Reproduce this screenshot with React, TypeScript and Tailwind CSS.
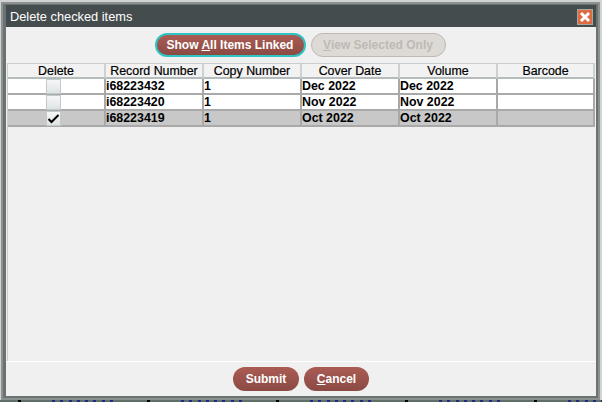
const columns = ["Delete", "Record Number", "Copy Number", "Cover Date", "Volume", "Barcode"];

const rows = [
  { id: "i68223432", copy: "1", cover: "Dec 2022", volume: "Dec 2022", checked: false },
  { id: "i68223420", copy: "1", cover: "Nov 2022", volume: "Nov 2022", checked: false },
  { id: "i68223419", copy: "1", cover: "Oct 2022", volume: "Oct 2022", checked: true },
];

function CheckBox({ checked }: { checked: boolean }) {
  return (
    <div className="w-[15px] h-[15px] border border-[#c4caca] bg-gradient-to-b from-[#f6f8f8] to-[#dde3e3] flex items-center justify-center">
      {checked && (
        <svg width="13" height="11" viewBox="0 0 13 11">
          <path d="M1.5 6 L4.5 9 L11.5 2" fill="none" stroke="#000" strokeWidth="2" />
        </svg>
      )}
    </div>
  );
}

function PillButton({
  children,
  className,
}: {
  children: React.ReactNode;
  className: string;
}) {
  return (
    <button className={"h-[24px] rounded-[13px] text-[12px] font-bold flex items-center justify-center " + className}>
      {children}
    </button>
  );
}

export default function App() {
  return (
    <div className="w-[602px] h-[402px] overflow-hidden bg-[#d2d4d4] flex flex-col font-['Liberation_Sans',Arial,sans-serif]">
      <div className="ml-[1px] mt-[2px] w-[599px] h-[398px] shrink-0 bg-[#6b7372] border-[2px] border-[#8a9190] pt-[1px] pl-[3px] pr-[2px] pb-[2px] flex flex-col">
        <div className="h-[22px] shrink-0 bg-[#454c4d] flex items-center justify-between pt-[2px] pl-[4px] pr-[3px]">
          <span className="text-[12.8px] text-white leading-none">Delete checked items</span>
          <div className="w-[16px] h-[16px] bg-[#dd6a42] border border-[#a8a8a0] flex items-center justify-center">
            <svg width="12" height="12" viewBox="0 0 12 12">
              <path d="M2 2 L10 10 M10 2 L2 10" stroke="#fff" strokeWidth="3" />
            </svg>
          </div>
        </div>
        <div className="flex-1 bg-[#f0f0f0] flex flex-col min-h-0">
          <div className="h-[36px] shrink-0 flex items-center justify-center gap-[5px] pr-[2px]">
            <PillButton className="w-[151px] bg-gradient-to-b from-[#aa5c54] to-[#8b4a44] border-2 border-[#2fc4c4] text-white">
              <span>
                Show <span className="underline">A</span>ll Items Linked
              </span>
            </PillButton>
            <PillButton className="w-[135px] bg-[#ddd9d5] border border-[#bdb9b5] text-[#bdb9b5]">
              <span>
                <span className="underline">V</span>iew Selected Only
              </span>
            </PillButton>
          </div>
          <div className="flex-1 min-h-0 mx-[1px] border-l border-t border-[#c8cece]">
            <div className="grid grid-cols-[98px_98px_98px_98px_98px_97px] text-[12.4px] text-black [-webkit-text-stroke:0.2px_#000]">
              {columns.map((c) => (
                <div
                  key={c}
                  className="h-[15px] pt-[2px] bg-[#f2f2f2] border-r-2 border-b-2 border-r-[#ccd2d2] border-b-[#b4bcbc] flex items-center justify-center leading-none"
                >
                  {c}
                </div>
              ))}
            </div>
            {rows.map((r) => (
              <div
                key={r.id}
                className={
                  "grid grid-cols-[98px_98px_98px_98px_98px_97px] text-[12.4px] font-bold text-black " +
                  (r.checked ? "bg-[#c8c8c8]" : "bg-white")
                }
              >
                <div className="h-[16px] border-r-2 border-b-2 border-[#a9a9a9] flex items-center justify-center pr-[5px]">
                  <CheckBox checked={r.checked} />
                </div>
                {[r.id, r.copy, r.cover, r.volume, ""].map((v, i) => (
                  <div
                    key={i}
                    className="h-[16px] border-r-2 border-b-2 border-[#a9a9a9] flex items-center leading-none"
                  >
                    {v}
                  </div>
                ))}
              </div>
            ))}
          </div>
          <div className="h-[35px] shrink-0 flex items-center justify-center gap-[5px] border-t border-white">
            <PillButton className="w-[66px] bg-gradient-to-b from-[#aa5c54] to-[#8b4a44] text-white">
              Submit
            </PillButton>
            <PillButton className="w-[65px] bg-gradient-to-b from-[#aa5c54] to-[#8b4a44] text-white">
              <span>
                <span className="underline">C</span>ancel
              </span>
            </PillButton>
          </div>
        </div>
      </div>
      <div className="h-[2px] shrink-0 bg-[#5f6e66] flex pl-[18px]">
        {[0, 1, 2, 3, 4].map((n) => (
          <div key={n} className="w-[129px] shrink-0 flex">
            <div className="w-[3px] bg-black mr-[31px]" />
            <div className="w-[61px] flex justify-between">
              {[0, 1, 2, 3, 4, 5, 6, 7].map((m) => (
                <div key={m} className="w-[3px] bg-[#1c2a80]" />
              ))}
            </div>
          </div>
        ))}
      </div>
    </div>
  );
}
